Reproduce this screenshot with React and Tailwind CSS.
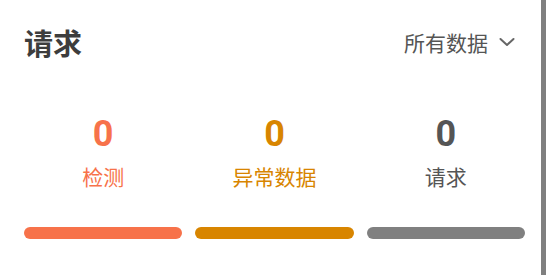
import React from "react";

const stats = [
  { value: "0", label: "检测", color: "text-[#f7724a]", bar: "bg-[#f7724a]" },
  { value: "0", label: "异常数据", color: "text-[#d88500]", bar: "bg-[#d88500]" },
  { value: "0", label: "请求", color: "text-[#555555]", bar: "bg-[#808080]" },
];

const App = () => {
  return (
    <div className="w-[550px] h-[275px] bg-white flex font-['Noto_Sans_CJK_SC','Noto_Sans',sans-serif] overflow-hidden">
      <div className="flex-1 pl-6 pr-4 flex flex-col">
        {/* Header */}
        <div className="flex items-center justify-between pt-[26px] h-[58px]">
          <h1 className="text-[29px] leading-none font-bold text-[#3d3d3d]">请求</h1>
          <button className="flex items-center gap-[11px] text-[21px] leading-none text-[#555555] pr-[10px]">
            所有数据
            <svg width="16" height="10" viewBox="0 0 16 10" fill="none">
              <path d="M1.5 2 L8 8 L14.5 2" stroke="#666666" strokeWidth="2" strokeLinecap="round" strokeLinejoin="round" />
            </svg>
          </button>
        </div>

        {/* Stats */}
        <div className="grid grid-cols-3 gap-[13px] mt-[58px]">
          {stats.map((s) => (
            <div key={s.label} className="flex flex-col items-center">
              <div className={`text-[36px] leading-none font-bold font-['Roboto',sans-serif] ${s.color}`}>{s.value}</div>
              <div className={`mt-[14px] text-[21px] leading-none ${s.color}`}>{s.label}</div>
            </div>
          ))}
        </div>

        {/* Bars */}
        <div className="grid grid-cols-3 gap-[13px] mt-[40px]">
          {stats.map((s) => (
            <div key={s.label} className={`h-[12px] rounded-full ${s.bar}`} />
          ))}
        </div>
      </div>
      <div className="w-[5px] h-full bg-[#808080]" />
      <div className="w-[4px]" />
    </div>
  );
};

export default App;
